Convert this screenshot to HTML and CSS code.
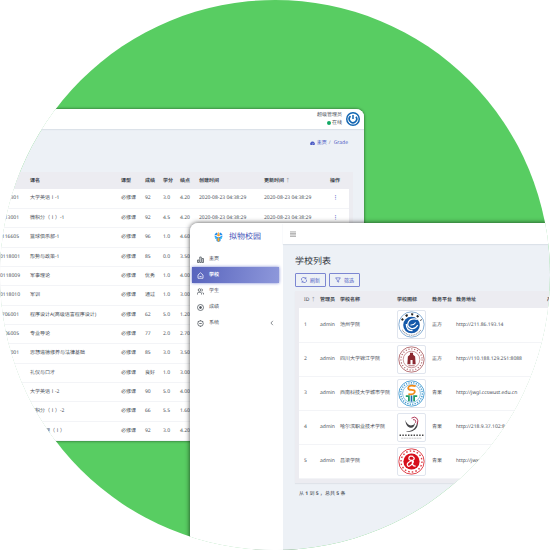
FILE: index.html
```html
<!DOCTYPE html>
<html lang="zh-CN">
<head>
<meta charset="utf-8">
<title>拟物校园</title>
<link rel="stylesheet" href="styles.css">
</head>
<body>
<div class="scene">
  <section class="window window-grades">
    <header class="topbar">
      <div class="user">
        <span>超级管理员</span>
        <span class="status"><i class="dot"></i>在线</span>
      </div>
      <svg class="avatar" viewBox="0 0 14 14"><circle cx="7" cy="7" r="7" fill="#1266b2"/><circle cx="7" cy="7" r="5.500" fill="#fff"/><path d="M4.500 4.200A3.700 3.700 0 1 0 10 4.800" fill="none" stroke="#1266b2" stroke-width="1.700"/><path d="M7 3v4" fill="none" stroke="#1266b2" stroke-width="1.500"/></svg>
    </header>
    <nav class="crumbs">
      <svg viewBox="0 0 10 10"><path d="M5 1a4.600 4.600 0 0 0-4 7h8a4.600 4.600 0 0 0-4-7z" fill="#4c5bc4"/><path d="M5 7l1.500-3" stroke="#fff"/></svg>
      <a href="#">主页</a><span>/</span><a href="#">Grade</a>
    </nav>
    <div class="card">
      <table class="grades">
        <colgroup><col class="g-id"><col class="g-name"><col class="g-type"><col class="g-score"><col class="g-credit"><col class="g-point"><col class="g-date"><col class="g-date2"><col></colgroup>
        <thead><tr><th></th><th>课名</th><th>课型</th><th>成绩</th><th>学分</th><th>绩点</th><th>创建时间</th><th>更新时间 <span class="sort">↑</span></th><th>操作</th></tr></thead>
        <tbody>
          <tr><td>301</td><td>大学英语Ⅰ-1</td><td>必修课</td><td>92</td><td>3.0</td><td>4.20</td><td>2020-08-23 04:38:29</td><td>2020-08-23 04:38:29</td><td><a href="#">⋮</a></td></tr>
          <tr><td>13001</td><td>微积分（Ⅰ）-1</td><td>必修课</td><td>92</td><td>4.5</td><td>4.20</td><td>2020-08-23 04:38:29</td><td>2020-08-23 04:38:29</td><td><a href="#">⋮</a></td></tr>
          <tr><td>116605</td><td>篮球俱乐部-1</td><td>必修课</td><td>96</td><td>1.0</td><td>4.60</td><td></td><td></td><td></td></tr>
          <tr><td>0118001</td><td>形势与政策-1</td><td>必修课</td><td>85</td><td>0.0</td><td>3.50</td><td></td><td></td><td></td></tr>
          <tr><td>0118009</td><td>军事理论</td><td>必修课</td><td>优秀</td><td>1.0</td><td>4.00</td><td></td><td></td><td></td></tr>
          <tr><td>0118010</td><td>军训</td><td>必修课</td><td>通过</td><td>1.0</td><td>3.00</td><td></td><td></td><td></td></tr>
          <tr><td>706001</td><td>程序设计A(高级语言程序设计)</td><td>必修课</td><td>62</td><td>5.0</td><td>1.20</td><td></td><td></td><td></td></tr>
          <tr><td>06005</td><td>专业导论</td><td>必修课</td><td>77</td><td>2.0</td><td>2.70</td><td></td><td></td><td></td></tr>
          <tr><td>001</td><td>思想道德修养与法律基础</td><td>必修课</td><td>85</td><td>3.0</td><td>3.50</td><td></td><td></td><td></td></tr>
          <tr><td></td><td>礼仪与口才</td><td>必修课</td><td>良好</td><td>1.0</td><td>3.00</td><td></td><td></td><td></td></tr>
          <tr><td></td><td>大学英语Ⅰ-2</td><td>必修课</td><td>90</td><td>5.0</td><td>4.00</td><td></td><td></td><td></td></tr>
          <tr><td></td><td>微积分（Ⅰ）-2</td><td>必修课</td><td>66</td><td>5.5</td><td>1.60</td><td></td><td></td><td></td></tr>
          <tr><td></td><td>大学物理（Ⅰ）</td><td>必修课</td><td>92</td><td>3.0</td><td>4.20</td><td></td><td></td><td></td></tr>
        </tbody>
      </table>
    </div>
  </section>

  <section class="window window-schools">
    <aside class="sidebar">
      <div class="brand">
        <svg viewBox="0 0 18 20"><path d="M1 5l4-4 3 3-4 3zM17 5l-4-4-3 3 4 3z" fill="#1c8cf0"/><path d="M7 2l2-1.500L11 2 9 4z" fill="#ff9a1f"/><path d="M1 7l8 4 8-4-1 5-3 1v5l-4 2-4-2v-5l-3-1z" fill="#1c8cf0"/><path d="M5 6l4-2 4 2-4 3z" fill="#ff9a1f"/><path d="M7 11l2 1 2-1v7l-2 1.500L7 18z" fill="#ffa726"/><path d="M2 9l3 2v4l-3-2zM16 9l-3 2v4l3-2z" fill="#43c5f8"/></svg>
        <span>拟物校园</span>
      </div>
      <nav class="menu">
        <a href="#"><svg viewBox="0 0 14 14"><path d="M1 13V8h3v5zM5.500 13V2h3v11zM10 13V5h3v8z"/></svg>主页</a>
        <a href="#" class="active"><svg viewBox="0 0 14 14"><path d="M2 6l5-4.500L12 6v6.500H2zM5 9h4"/></svg>学校</a>
        <a href="#"><svg viewBox="0 0 14 14"><circle cx="5" cy="4" r="2.600"/><path d="M1 13V11q0-2.500 2.500-2.500h3Q9 8.500 9 11v2M9 1.500a2.600 2.600 0 0 1 0 5M11 8.500q2.200.5 2.200 4.500"/></svg>学生</a>
        <a href="#"><svg viewBox="0 0 14 14"><circle cx="7" cy="7" r="6"/><circle cx="7" cy="7" r="2" fill="currentColor"/></svg>成绩</a>
        <a href="#"><svg viewBox="0 0 14 14"><circle cx="7" cy="7" r="5.500"/><path d="M4.500 7h5M7 .5v2M7 11.500v2M2 2.500l1.500 1.500M12 2.500L10.500 4"/></svg>系统<svg class="chevron" viewBox="0 0 14 14"><path d="M9 2L4.500 7 9 12"/></svg></a>
      </nav>
    </aside>
    <div class="main">
      <header class="topbar topbar-schools"><button class="toggle" aria-label="菜单"><svg viewBox="0 0 10 10"><path d="M0 1.500h10M0 4h10M0 6.500h10M0 9h10" stroke="#777" fill="none"/></svg></button></header>
      <div class="content">
        <h1>学校列表</h1>
        <div class="actions">
          <button class="btn"><svg viewBox="0 0 14 14"><path d="M1.500 8a5.500 5 0 0 1 9.500-5M11.500.5V4H8M12.500 6a5.500 5 0 0 1-9.500 5M2.500 13.500V10H6"/></svg>刷新</button>
          <button class="btn"><svg viewBox="0 0 14 14"><path d="M1.500 2h11L8.500 7.500V12l-3-1.500v-3z"/></svg>筛选</button>
        </div>
        <div class="card card-schools">
          <table class="schools">
            <colgroup><col class="s-id"><col class="s-admin"><col class="s-name"><col class="s-logo"><col class="s-plat"><col class="s-url"><col></colgroup>
            <thead><tr><th><span class="id">ID</span> <span class="sort">↑</span></th><th>管理员</th><th>学校名称</th><th>学校图标</th><th>教务平台</th><th>教务地址</th><th>产</th></tr></thead>
            <tbody>
              <tr><td>1</td><td>admin</td><td>池州学院</td><td><svg class="logo" viewBox="0 0 26 26"><circle cx="13" cy="13" r="12.200" fill="none" stroke="#6f9fce" stroke-width=".8"/><path d="M3.800 9A10.200 10.200 0 0 1 22.200 9" fill="none" stroke="#222" stroke-width="2" stroke-dasharray="2 3.500"/><path d="M4 18A10.300 10.300 0 0 0 22 18" fill="none" stroke="#8a8f98" stroke-width="1" stroke-dasharray="1 .7"/><circle cx="13" cy="13.500" r="8" fill="#1559aa"/><path d="M19 8q-7-1.500-9 2.500t2 6 7-3M8 12.500q0 6.500 6 6.500" fill="none" stroke="#fff" stroke-width="1.200"/><path d="M12 13.500q3 .5 5-2.500" fill="none" stroke="#fff"/></svg></td><td>正方</td><td>http://211.86.193.14</td><td></td></tr>
              <tr><td>2</td><td>admin</td><td>四川大学锦江学院</td><td><svg class="logo" viewBox="0 0 26 26"><g fill="none" stroke="#a9595e"><circle cx="13" cy="13" r="12.200" stroke-width=".8"/><circle cx="13" cy="13" r="10.200" stroke-width="1.200" stroke-dasharray="1 1.800"/><circle cx="13" cy="13" r="8" stroke-width=".6"/></g><path d="M11.500 6.500h3v2l2 1.500.5 7.500h-3v-4h-2v4H9l.5-7.500 2-1.500z" fill="#8b2930"/><path d="M10 19h6" stroke="#a9595e" stroke-width=".8"/></svg></td><td>正方</td><td>http://110.188.129.251:8088</td><td></td></tr>
              <tr><td>3</td><td>admin</td><td>西南科技大学城市学院</td><td><svg class="logo" viewBox="0 0 26 26"><g fill="none" stroke="#4a9fd2"><circle cx="13" cy="13" r="12.200" stroke-width=".9"/><circle cx="13" cy="13" r="10.400" stroke-width="1.400" stroke-dasharray="1.200 1.200"/><circle cx="13" cy="13" r="8.600" stroke-width=".6"/></g><path d="M17 6q-6-1.500-7 1t3 2.500 3 2.500-6 1.500" fill="none" stroke="#f28b17" stroke-width="1.700"/><path d="M7.500 15.500h3v5M18.500 15.500h-3v5" fill="none" stroke="#239c67" stroke-width="1.700"/><path d="M13 15v6" stroke="#176fb5" stroke-width="1.600"/></svg></td><td>青果</td><td>http://jwgl.ccswust.edu.cn</td><td></td></tr>
              <tr><td>4</td><td>admin</td><td>哈尔滨职业技术学院</td><td><svg class="logo" viewBox="0 0 26 26"><path d="M7 5.500q1.500 5 5.500 5.500 3 0 4-2.500-1 6-5.500 4.500Q7.500 11.500 7 5.500z" fill="#454548"/><path d="M18.500 7q1.500 5-2 8t-9 2q6-.5 8.500-3.500t2.500-6.500z" fill="#454548"/><path d="M13 4q3-2 5 0t.5 6M14.500 5.500q3-.5 2.500 3" fill="none" stroke="#a92a4c" stroke-width=".9"/><path d="M1.500 20.500h23" stroke="#444" stroke-width="1.600" stroke-dasharray="1.400 1.300"/><path d="M3 23.300h20" stroke="#aaa" stroke-width=".6" stroke-dasharray="2 .5"/></svg></td><td>青果</td><td>http://218.9.37.102:8</td><td></td></tr>
              <tr><td>5</td><td>admin</td><td>吕梁学院</td><td><svg class="logo" viewBox="0 0 26 26"><g fill="none" stroke="#dd3840"><circle cx="13" cy="13" r="12.200" stroke-width=".9"/><circle cx="13" cy="13" r="10.100" stroke-width="1.300" stroke-dasharray="1.500 2"/></g><circle cx="13" cy="13" r="7.800" fill="#d60f1b"/><path d="M14.500 8q-3.500-1-4 1.500t3.500 2.500q3-1.500.5-3.500M14 12q-6 2-5 4.500t4-.5 1-3.500q-1 5 3 5" fill="none" stroke="#fff" stroke-width="1.200"/></svg></td><td>青果</td><td>http://jwxt</td><td></td></tr>
            </tbody>
          </table>
        </div>
        <p class="summary">从 <b>1</b> 到 <b>5</b> ，总共 <b>5</b> 条</p>
      </div>
    </div>
  </section>
</div>
</body>
</html>
```
FILE: styles.css
```css
* { box-sizing: border-box; }

body {
  margin: 0;
  background: #fff;
  color: #4a5058;
  font: 5px/8px "Noto Sans", "Noto Sans CJK SC", sans-serif;
  text-rendering: geometricPrecision;
}

a { color: inherit; text-decoration: none; }
svg { display: block; flex: none; }

.scene {
  position: relative;
  width: 100vmin;
  aspect-ratio: 1;
  background: #58cd62;
  clip-path: circle(50%);
  overflow: hidden;
}

.window { position: absolute; overflow: hidden; background: #edf1f6; }

.window-grades {
  top: 109px;
  left: 0;
  width: 364px;
  border-radius: 0 8px 0 0;
  box-shadow: 0 0 3px rgba(0, 0, 0, .6);
}

.window-schools {
  display: flex;
  top: 223px;
  left: 190px;
  right: -40px;
  bottom: 0;
  border-radius: 8px 0 0 0;
  box-shadow: 0 0 5px rgba(0, 0, 0, .7);
}

.topbar {
  display: flex;
  align-items: center;
  justify-content: flex-end;
  gap: 4px;
  height: 20px;
  padding-right: 4px;
  background: #fff;
  box-shadow: 0 1px 1px #dce2e9;
}

.user { display: flex; flex-direction: column; align-items: flex-end; }
.status { display: flex; align-items: center; gap: 1px; }
.dot { width: 4px; height: 4px; border-radius: 50%; background: #12a865; }
.avatar { width: 14px; height: 14px; }

.crumbs {
  display: flex;
  justify-content: flex-end;
  align-items: center;
  gap: 2px;
  height: 43px;
  padding: 0 16px 15px 0;
  color: #4c5bc4;
}
.crumbs svg { width: 5px; height: 5px; }
.crumbs span { color: #8990a0; padding-right: 1px; }

.card { margin-right: 11px; padding-right: 4px; background: #ececf1; }

table { width: 100%; table-layout: fixed; border-collapse: collapse; }
th, td { padding: 0; text-align: left; white-space: nowrap; }
th { height: 17px; color: #40454d; font-weight: 700; }
td { background: #fff; border-bottom: 1px solid #f3f4f7; }
.sort { color: #8a9099; font-weight: 400; }
.id { font-weight: 400; }

.grades td { height: 19px; }
.grades tr:nth-child(3n) td { height: 20px; }
.grades td:first-child { padding-right: 11px; text-align: right; }
.grades th:last-child, .grades td:last-child { padding-right: 9px; text-align: right; }
.grades td:last-child { padding-right: 11px; color: #3142b8; font-weight: 700; }
.g-id { width: 30px; }
.g-name { width: 91px; }
.g-type { width: 24px; }
.g-score { width: 18px; }
.g-credit { width: 17px; }
.g-point { width: 19px; }
.g-date { width: 65px; }
.g-date2 { width: 65px; }

.sidebar { flex: none; width: 93px; background: #fff; }
.brand {
  display: flex;
  align-items: center;
  justify-content: center;
  gap: 6px;
  height: 28px;
  padding-left: 2px;
  color: #4553b8;
  font-size: 8px;
  line-height: 12px;
}
.brand svg { width: 9px; height: 10px; }

.menu { display: flex; flex-direction: column; padding: 0 4px 0 2px; }
.menu a {
  display: flex;
  align-items: center;
  gap: 5px;
  height: 16px;
  padding: 0 4px 0 5px;
}
.menu svg {
  width: 7px;
  height: 7px;
  fill: none;
  stroke: currentColor;
  stroke-width: 1.5;
}
.menu .active {
  background: linear-gradient(100deg, #5864bd, #8e98db);
  box-shadow: 0 0 3px #7883d1;
  color: #fff;
  font-weight: 700;
}
.menu .chevron { margin-left: auto; width: 6px; height: 6px; }

.main { flex: 1; min-width: 0; }
.topbar-schools { justify-content: flex-start; height: 21px; padding-left: 7px; }
.toggle { padding: 0; border: 0; background: none; }
.toggle svg { width: 6px; height: 6px; }

.content { padding: 11px 0 0 12px; }
h1 { margin: 0 0 6px; color: #30353d; font-size: 9px; font-weight: 400; line-height: 12px; }

.actions { display: flex; gap: 3px; margin-bottom: 4px; }
.btn {
  display: flex;
  align-items: center;
  justify-content: center;
  gap: 3px;
  width: 31px;
  height: 14px;
  padding: 0;
  border: 1px solid #7c87d2;
  border-radius: 1px;
  background: transparent;
  color: #4c5bc4;
  font: inherit;
}
.btn svg { width: 6px; height: 6px; fill: none; stroke: currentColor; stroke-width: 1.5; }

.card-schools { margin: 0; padding: 0 4px 4px; box-shadow: 0 1px 1px #dfe3e9; }
.schools td { height: 34px; }
.schools th:first-child, .schools td:first-child { padding-left: 5px; }
.s-id { width: 21px; }
.s-admin { width: 20px; }
.s-name { width: 57px; }
.s-logo { width: 35px; }
.s-plat { width: 24px; }
.s-url { width: 91px; }
.logo { width: 29px; height: 29px; border: 1px solid #e0e5ee; border-radius: 2px; }

.summary { margin: 7px 0 0 4px; }
```
